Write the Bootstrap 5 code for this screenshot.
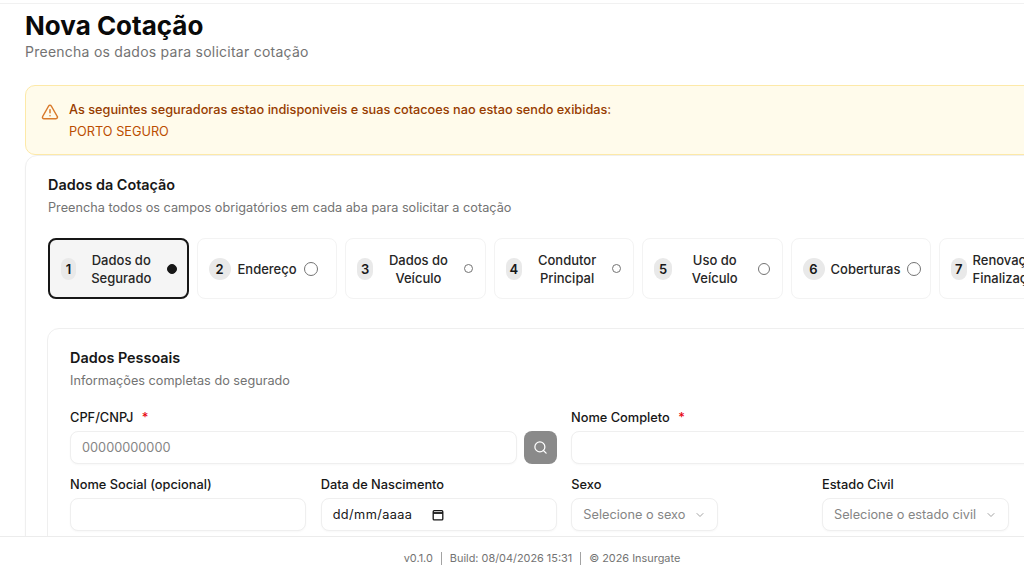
<!DOCTYPE html>
<html lang="pt-BR">
<head>
  <meta charset="UTF-8">
  <title>Nova Cotação</title>
  <link href="https://cdn.jsdelivr.net/npm/bootstrap@5.3.0/dist/css/bootstrap.min.css" rel="stylesheet">
  <style>
    html, body { height: 100%; }
    body { font-family: Inter, "Liberation Sans", sans-serif; color: #171717; background: #fff; overflow: hidden; }
    .page { height: 576px; width: 1024px; overflow: hidden; }
    .main { flex: 1 1 0; min-height: 0; overflow: hidden; border-top: 1px solid #f1f1f1; margin-top: 3px; padding: 6px 0 0 25px; }
    .content { width: 1080px; }
    .page-title { font-size: 26px; font-weight: 700; line-height: 32px; color: #0a0a0a; margin: 0; }
    .page-sub { font-size: 14px; line-height: 20px; color: #737373; margin: 0; letter-spacing: .25px; }
    .warn { margin-top: 23px; height: 70px; background: #fffbeb; border: 1px solid #fde9a8; border-radius: 10px; padding: 13px 15px; gap: 10px; color: #973c00; font-size: 12.72px; line-height: 21.5px; }
    .warn strong { font-weight: 500; }
    .warn .name { color: #bb4d00; }
    .warn svg { margin-top: 4px; flex: none; }
    .outer { border: 1px solid #efefef; border-radius: 12px; padding: 19px 22px 40px; box-shadow: 0 1px 2px rgba(0,0,0,.03); }
    .card-title-a { font-size: 14.4px; font-weight: 600; line-height: 20px; margin: 0; }
    .card-sub { font-size: 12.7px; line-height: 18px; color: #737373; margin: 4px 0 0; }
    .steps { margin-top: 21px; gap: 8px; width: 1200px; }
    .step { width: 140.5px; height: 61px; flex: none; border: 1px solid #f3f3f3; border-radius: 8px; padding: 0 12px 0 11px; gap: 6px; font-size: 13px; line-height: 18px; font-weight: 500; text-align: center; color: #262626; }
    .step.active { background: #f5f5f5; border: 2px solid #171717; padding: 0 10px 0 11px; }
    .step .num { flex: none; min-width: 15px; height: 22px; padding: 0 4px; border-radius: 11px; background: #e9e9e9; font-weight: 600; font-size: 13px; line-height: 22px; color: #171717; }
    .step .num.wide { width: 22px; padding: 0; }
    .step .num.mid { width: 18px; padding: 0; }
    .step .txt { flex: 1 1 0; min-width: 0; }
    .step.tight { gap: 7px; }
    .step.tight .txt { flex: none; }
    .step.snug .num { margin-right: -1px; }
    .step.last { padding-right: 18px; }
    .step .dot { flex: none; border-radius: 50%; border: 1px solid #737373; }
    .step .dot.lg { width: 14px; height: 14px; }
    .step .dot.md { width: 12px; height: 12px; }
    .step .dot.sm { width: 9px; height: 9px; }
    .step .dot.fill { width: 10px; height: 10px; background: #171717; border-color: #171717; }
    .inner { margin: 29px 0 0 -1px; border: 1px solid #efefef; border-radius: 12px; padding: 19px 22px 40px; }
    .inner h2 { font-size: 14.4px; font-weight: 600; line-height: 20px; margin: 0; }
    .inner .card-sub { margin-top: 4px; }
    .lbl { display: block; font-size: 12.8px; font-weight: 500; line-height: 16px; margin: 0 0 5px; color: #171717; }
    .lbl i { color: #e7000b; font-style: normal; margin-left: 5px; }
    .form-control.fld, .fld { height: 33px; border: 1px solid #efefef; border-radius: 8px; font-size: 12.75px; padding: 0 11px; box-shadow: 0 1px 2px rgba(0,0,0,.03); background-color: #fff; color: #171717; }
    .fld::placeholder { color: #858585; opacity: 1; }
    .fake-select { color: #858585; width: fit-content; gap: 9px; }
    .btn-search { width: 33px; height: 33px; flex: none; padding: 0; background: #8a8a8a; border: 0; border-radius: 8px; }
    .cpf-row { gap: 7px; }
    .grid2 { display: grid; grid-template-columns: 487px 488px; column-gap: 14px; margin-top: 20px; }
    .grid4 { display: grid; grid-template-columns: repeat(4, 236px); column-gap: 14.67px; margin-top: 13px; }
    .date-text { letter-spacing: .4px; }
    .date-field { gap: 20px; }
    .footer-bar { height: 40px; flex: none; border-top: 1px solid #ececec; background: #fff; font-size: 10.9px; color: #737373; gap: 8px; padding: 4px 0 0 60px; }
    .footer-bar .sep { width: 1px; height: 13px; background: #a3a3a3; }
  </style>
</head>
<body>
  <div class="page d-flex flex-column">
    <div class="main">
      <div class="content">
        <h1 class="page-title">Nova Cotação</h1>
        <p class="page-sub">Preencha os dados para solicitar cotação</p>

        <div class="warn d-flex">
          <svg width="18" height="18" viewBox="0 0 24 24" fill="none" stroke="#d97a2b" stroke-width="2" stroke-linecap="round" stroke-linejoin="round"><path d="m21.7 18-8-14a2 2 0 0 0-3.5 0l-8 14A2 2 0 0 0 4 21h16a2 2 0 0 0 1.7-3"/><path d="M12 9v4"/><path d="M12 17h.01"/></svg>
          <div>
            <strong class="d-block">As seguintes seguradoras estao indisponiveis e suas cotacoes nao estao sendo exibidas:</strong>
            <span class="name">PORTO SEGURO</span>
          </div>
        </div>

        <div class="outer">
          <h2 class="card-title-a">Dados da Cotação</h2>
          <p class="card-sub">Preencha todos os campos obrigatórios em cada aba para solicitar a cotação</p>

          <div class="steps d-flex">
            <div class="step active d-flex align-items-center"><span class="num">1</span><span class="txt">Dados do Segurado</span><span class="dot fill"></span></div>
            <div class="step tight d-flex align-items-center"><span class="num wide">2</span><span class="txt">Endereço</span><span class="dot lg"></span></div>
            <div class="step d-flex align-items-center"><span class="num">3</span><span class="txt">Dados do Veículo</span><span class="dot sm"></span></div>
            <div class="step d-flex align-items-center"><span class="num">4</span><span class="txt">Condutor Principal</span><span class="dot sm"></span></div>
            <div class="step d-flex align-items-center"><span class="num mid">5</span><span class="txt">Uso do Veículo</span><span class="dot md"></span></div>
            <div class="step tight snug d-flex align-items-center"><span class="num wide">6</span><span class="txt">Coberturas</span><span class="dot lg"></span></div>
            <div class="step last d-flex align-items-center"><span class="num">7</span><span class="txt">Renovação Finalização</span><span class="dot lg"></span></div>
          </div>

          <div class="inner">
            <h2>Dados Pessoais</h2>
            <p class="card-sub">Informações completas do segurado</p>

            <div class="grid2">
              <div>
                <label class="lbl">CPF/CNPJ <i>*</i></label>
                <div class="cpf-row d-flex">
                  <input class="form-control fld" placeholder="00000000000">
                  <button class="btn btn-search d-flex align-items-center justify-content-center" type="button" aria-label="Buscar">
                    <svg width="15" height="15" viewBox="0 0 24 24" fill="none" stroke="#fff" stroke-width="2" stroke-linecap="round" stroke-linejoin="round"><circle cx="11" cy="11" r="8"/><path d="m21 21-4.3-4.3"/></svg>
                  </button>
                </div>
              </div>
              <div>
                <label class="lbl">Nome Completo <i>*</i></label>
                <input class="form-control fld">
              </div>
            </div>

            <div class="grid4">
              <div>
                <label class="lbl">Nome Social (opcional)</label>
                <input class="form-control fld">
              </div>
              <div>
                <label class="lbl">Data de Nascimento</label>
                <div class="fld date-field d-flex align-items-center">
                  <span class="date-text">dd/mm/aaaa</span>
                  <svg width="12" height="12" viewBox="0 0 12 12" fill="none" stroke="#171717" stroke-width="1.3"><rect x="1.2" y="1.7" width="9.6" height="9.2" rx="1"/><path d="M1.2 4h9.6" stroke-width="1.8"/></svg>
                </div>
              </div>
              <div>
                <label class="lbl">Sexo</label>
                <div class="fld fake-select d-flex align-items-center">Selecione o sexo
                  <svg width="12" height="12" viewBox="0 0 24 24" fill="none" stroke="#a3a3a3" stroke-width="2" stroke-linecap="round" stroke-linejoin="round"><path d="m6 9 6 6 6-6"/></svg>
                </div>
              </div>
              <div>
                <label class="lbl">Estado Civil</label>
                <div class="fld fake-select d-flex align-items-center">Selecione o estado civil
                  <svg width="12" height="12" viewBox="0 0 24 24" fill="none" stroke="#a3a3a3" stroke-width="2" stroke-linecap="round" stroke-linejoin="round"><path d="m6 9 6 6 6-6"/></svg>
                </div>
              </div>
            </div>
          </div>
        </div>
      </div>
    </div>
    <footer class="footer-bar d-flex align-items-center justify-content-center">
      <span>v0.1.0</span><span class="sep"></span><span>Build: 08/04/2026 15:31</span><span class="sep"></span><span>© 2026 Insurgate</span>
    </footer>
  </div>
  <script src="https://cdn.jsdelivr.net/npm/bootstrap@5.3.0/dist/js/bootstrap.bundle.min.js"></script>
</body>
</html>
